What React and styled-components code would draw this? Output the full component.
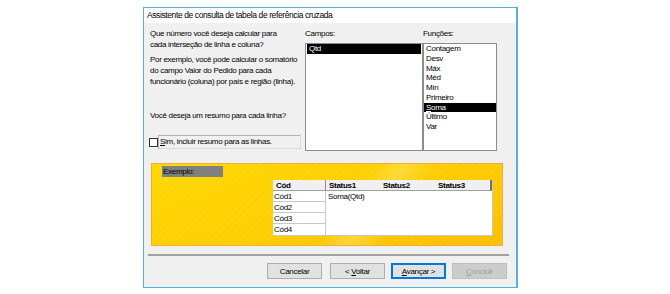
import styled, { createGlobalStyle } from "styled-components";

const GlobalStyle = createGlobalStyle`
  html, body {
    margin: 0;
    padding: 0;
    background: #ffffff;
  }
  body {
    font-family: "Liberation Sans", Arial, sans-serif;
    font-size: 8px;
    letter-spacing: -0.3px;
    color: #000;
  }
`;

const campos = ["Qtd"];
const funcoes = ["Contagem", "Desv", "Máx", "Méd", "Mín", "Primeiro", "Soma", "Último", "Var"];

function App() {
  return (
    <>
      <GlobalStyle />
      <Page>
        <Window>
          <TitleBar>Assistente de consulta de tabela de referência cruzada</TitleBar>
          <Body>
            <Top>
              <LeftColumn>
                <Paragraph>
                  Que número você deseja calcular para
                  <br />
                  cada interseção de linha e coluna?
                </Paragraph>
                <Paragraph>
                  Por exemplo, você pode calcular o somatório
                  <br />
                  do campo Valor do Pedido para cada
                  <br />
                  funcionário (coluna) por país e região (linha).
                </Paragraph>
                <Question>Você deseja um resumo para cada linha?</Question>
                <CheckRow>
                  <CheckBox />
                  <CheckLabel>
                    <u>S</u>im, incluir resumo para as linhas.
                  </CheckLabel>
                </CheckRow>
              </LeftColumn>
              <ListColumn>
                <ListTitle>Campos:</ListTitle>
                <ListBox>
                  {campos.map((c) => (
                    <ListItem key={c} $selected $inset>
                      {c}
                    </ListItem>
                  ))}
                </ListBox>
              </ListColumn>
              <ListColumn>
                <ListTitle>Funções:</ListTitle>
                <ListBox>
                  {funcoes.map((f) => (
                    <ListItem key={f} $selected={f === "Soma"}>
                      {f === "Soma" ? (
                        <>
                          <u>S</u>oma
                        </>
                      ) : (
                        f
                      )}
                    </ListItem>
                  ))}
                </ListBox>
              </ListColumn>
            </Top>

            <Example>
              <ExampleTag>Exemplo:</ExampleTag>
              <Table>
                <CodColumn>
                  <HeadCell>Cód</HeadCell>
                  <RowCell>Cód1</RowCell>
                  <RowCell>Cód2</RowCell>
                  <RowCell>Cód3</RowCell>
                  <RowCell $last>Cód4</RowCell>
                </CodColumn>
                <StatusColumn>
                  <StatusHead>
                    <span>Status1</span>
                    <span>Status2</span>
                    <span>Status3</span>
                  </StatusHead>
                  <StatusBody>Soma(Qtd)</StatusBody>
                </StatusColumn>
              </Table>
            </Example>

            <Separator />

            <Buttons>
              <Button>Cancelar</Button>
              <Button $gap>
                &lt; <u>V</u>oltar
              </Button>
              <Button $default>
                <u>A</u>vançar &gt;
              </Button>
              <Button disabled>
                <u>C</u>oncluir
              </Button>
            </Buttons>
          </Body>
        </Window>
      </Page>
    </>
  );
}

export default App;

const Page = styled.div`
  padding: 7px 0 0 143px;
`;

const Window = styled.div`
  width: 372px;
  height: 279px;
  border: 1px solid #5aaee3;
  border-right-width: 2px;
  background: #f0f0f0;
  display: flex;
  flex-direction: column;
  white-space: nowrap;
`;

const TitleBar = styled.div`
  height: 15px;
  line-height: 15px;
  background: #ffffff;
  padding-left: 3px;
  font-size: 8.5px;
  letter-spacing: -0.4px;
`;

const Body = styled.div`
  flex: 1;
  display: flex;
  flex-direction: column;
  padding: 5px 0 0 4px;
`;

const Top = styled.div`
  display: grid;
  grid-template-columns: 157px 118px 74px;
  height: 128px;
`;

const LeftColumn = styled.div`
  display: flex;
  flex-direction: column;
  padding-left: 2px;
`;

const Paragraph = styled.p`
  margin: 0 0 4px;
  line-height: 11px;
`;

const Question = styled.p`
  margin: 19px 0 0;
  line-height: 11px;
`;

const CheckRow = styled.div`
  display: flex;
  align-items: flex-start;
  margin-top: 14px;
  margin-left: -1px;
`;

const CheckBox = styled.span`
  width: 7px;
  height: 7px;
  margin-top: 3px;
  border: 1px solid #333;
  background: #fff;
  flex: none;
`;

const CheckLabel = styled.span`
  width: 143px;
  height: 14px;
  line-height: 12px;
  padding-left: 1px;
  border: 1px solid #b4b4b4;
  border-right-color: #dadada;
  border-bottom-color: #dadada;
  box-sizing: border-box;
`;

const ListColumn = styled.div`
  display: flex;
  flex-direction: column;
`;

const ListTitle = styled.div`
  line-height: 11px;
  height: 11px;
  margin-bottom: 4px;
`;

const ListBox = styled.div`
  width: 100%;
  height: 108px;
  box-sizing: border-box;
  border: 1px solid #8c8c8c;
  background: #fff;
`;

const ListItem = styled.div`
  height: 9.75px;
  line-height: 9.75px;
  padding-left: 2px;
  margin: ${(p) => (p.$inset ? "0 1px" : "0")};
  background: ${(p) => (p.$selected ? "#000" : "transparent")};
  color: ${(p) => (p.$selected ? "#fff" : "#000")};
`;

const Example = styled.div`
  margin: 7px 0 0 3px;
  width: 352px;
  height: 83px;
  box-sizing: border-box;
  border: 1px solid #f2ad3c;
  padding: 2px 0 0 10px;
  background:
    linear-gradient(125deg, rgba(255, 255, 255, 0) 55%, rgba(255, 240, 150, 0.35) 62%, rgba(255, 255, 255, 0) 70%),
    repeating-linear-gradient(135deg, rgba(255, 230, 120, 0.12) 0 2px, rgba(255, 255, 255, 0) 2px 5px),
    linear-gradient(160deg, #ffd800 0%, #ffcc00 55%, #ffbe00 100%);
`;

const ExampleTag = styled.div`
  width: 60px;
  height: 11px;
  line-height: 11px;
  background: #808080;
  color: #000;
  padding-left: 1px;
`;

const Table = styled.div`
  display: flex;
  margin: 3px 0 0 111px;
  width: 219px;
  height: 55px;
  background: #fff;
  box-shadow: 1px 1px 0 #c8c8c8;
`;

const CodColumn = styled.div`
  width: 53px;
  display: flex;
  flex-direction: column;
`;

const HeadCell = styled.div`
  height: 11px;
  line-height: 11px;
  box-sizing: border-box;
  padding-left: 3px;
  font-weight: bold;
  background: #f0f0f0;
  border-bottom: 1px solid #a0a0a0;
  border-right: 1px solid #8c8c8c;
`;

const RowCell = styled.div`
  height: 11px;
  line-height: 11px;
  box-sizing: border-box;
  padding-left: 1px;
  border-bottom: ${(p) => (p.$last ? "none" : "1px solid #c8c8c8")};
  border-right: 1px solid #c8c8c8;
`;

const StatusColumn = styled.div`
  flex: 1;
  display: flex;
  flex-direction: column;
`;

const StatusHead = styled.div`
  height: 11px;
  line-height: 11px;
  box-sizing: border-box;
  display: grid;
  grid-template-columns: 54px 55px 1fr;
  padding-left: 3px;
  font-weight: bold;
  background: #f0f0f0;
  border-bottom: 1px solid #a0a0a0;
  border-right: 2px solid #707070;
`;

const StatusBody = styled.div`
  flex: 1;
  padding: 0 0 0 2px;
  line-height: 11px;
`;

const Separator = styled.div`
  margin: 8px 0 0 0;
  width: 361px;
  height: 2px;
  background: #a0a0a0;
`;

const Buttons = styled.div`
  display: flex;
  margin: 7px 0 0 119px;
`;

const Button = styled.button`
  width: 55px;
  height: 16px;
  margin-left: ${(p) => (p.$gap ? "8px" : "6px")};
  &:first-child {
    margin-left: 0;
  }
  padding: 0;
  font-family: inherit;
  font-size: 8px;
  letter-spacing: -0.3px;
  color: #000;
  background: #e1e1e1;
  border: 1px solid #adadad;
  box-sizing: border-box;
  box-shadow: ${(p) => (p.$default ? "inset 0 0 0 1px #0078d7" : "none")};
  border-color: ${(p) => (p.$default ? "#0078d7" : "#adadad")};

  &:disabled {
    color: #a0a0a0;
    background: #cccccc;
    border-color: #bfbfbf;
  }
`;
